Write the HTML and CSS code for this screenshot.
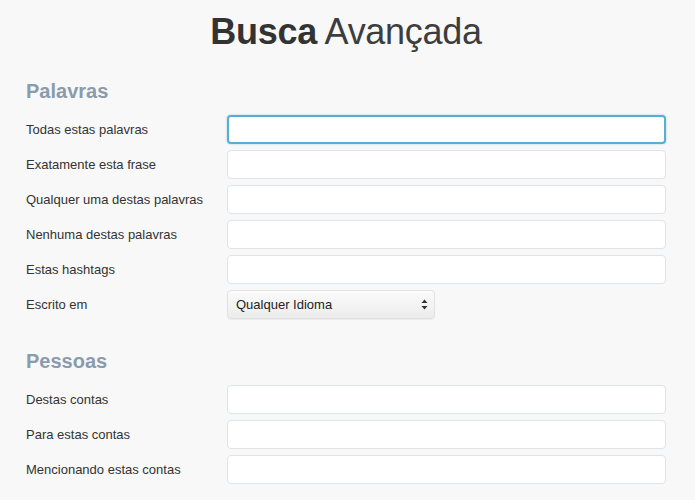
FILE: index.html
```html
<!DOCTYPE html>
<html lang="pt">
<head>
<meta charset="utf-8">
<title>Busca Avançada</title>
<link rel="stylesheet" href="styles.css">
</head>
<body>
<div class="page">
  <h1 class="title"><b>Busca</b> Avançada</h1>

  <h2 class="section-title">Palavras</h2>
  <div class="form-grid">
    <label class="label">Todas estas palavras</label>
    <input class="field focused" type="text">
    <label class="label">Exatamente esta frase</label>
    <input class="field" type="text">
    <label class="label">Qualquer uma destas palavras</label>
    <input class="field" type="text">
    <label class="label">Nenhuma destas palavras</label>
    <input class="field" type="text">
    <label class="label">Estas hashtags</label>
    <input class="field" type="text">
    <label class="label">Escrito em</label>
    <div class="select">
      <span class="select-text">Qualquer Idioma</span>
      <svg class="select-arrows" width="7" height="11" viewBox="0 0 7 11"><path d="M3.5 0.5 L6.5 4 L0.5 4 Z M3.5 10.5 L6.5 7 L0.5 7 Z" fill="#333"/></svg>
    </div>
  </div>

  <h2 class="section-title second">Pessoas</h2>
  <div class="form-grid">
    <label class="label">Destas contas</label>
    <input class="field" type="text">
    <label class="label">Para estas contas</label>
    <input class="field" type="text">
    <label class="label">Mencionando estas contas</label>
    <input class="field" type="text">
  </div>
</div>
</body>
</html>
```

FILE: styles.css
```css
html, body {
  margin: 0;
  padding: 0;
  background: #f8f8f8;
}
body {
  font-family: "Liberation Sans", Arial, sans-serif;
  color: #333;
}
.page {
  width: 640px;
  padding: 0 29px 0 26px;
}
.title {
  margin: 12px 0 0 0;
  font-size: 36px;
  line-height: 40px;
  font-weight: normal;
  text-align: center;
  color: #3d3d3d;
  letter-spacing: -0.3px;
}
.title b {
  font-weight: bold;
  color: #333;
}
.section-title {
  margin: 27px 0 12px 0;
  font-size: 20px;
  line-height: 24px;
  font-weight: bold;
  color: #8a9bab;
}
.section-title.second {
  margin-top: 30px;
}
.form-grid {
  display: grid;
  grid-template-columns: 201px 1fr;
  row-gap: 6px;
  align-items: center;
}
.label {
  font-size: 13px;
  line-height: 16px;
  color: #333;
}
.field {
  box-sizing: border-box;
  height: 29px;
  width: 100%;
  margin: 0;
  border: 1px solid #dfe4e9;
  border-radius: 4px;
  background: #fff;
  font: inherit;
  outline: none;
}
.field.focused {
  border: 2px solid #56afd5;
  box-shadow: 0 0 2px rgba(86, 175, 213, 0.6);
}
.select {
  box-sizing: border-box;
  width: 208px;
  height: 29px;
  display: flex;
  align-items: center;
  justify-content: space-between;
  padding: 0 6px 0 8px;
  border: 1px solid #e2e2e2;
  border-radius: 4px;
  background: linear-gradient(#fbfbfb, #ececec);
  box-shadow: 0 1px 1px rgba(0, 0, 0, 0.06);
  font-size: 13px;
  color: #222;
}
.select-arrows {
  display: block;
}
```
